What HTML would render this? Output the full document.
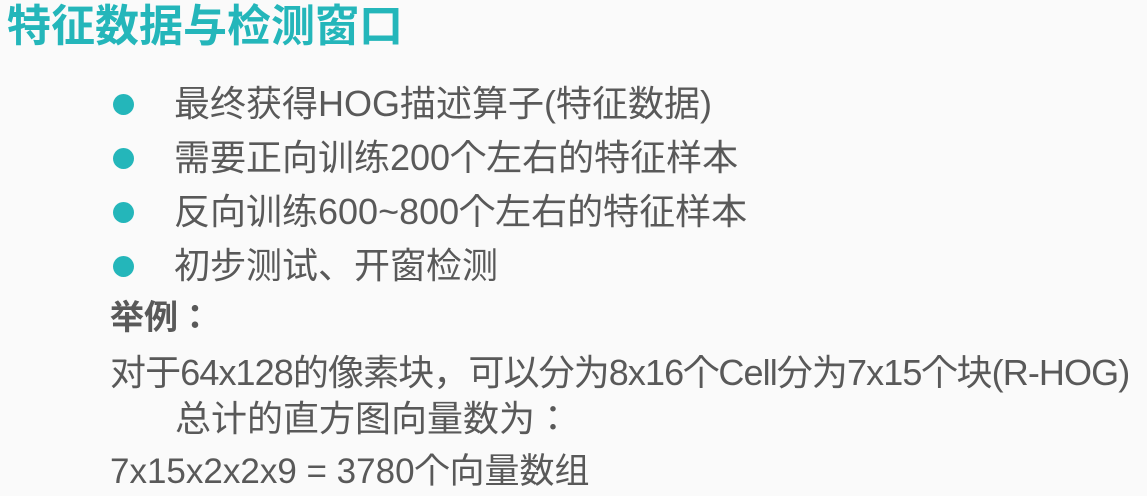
<!DOCTYPE html>
<html><head><meta charset="utf-8"><style>
html,body{margin:0;padding:0;}
body{width:1147px;height:496px;background:#fafafa;position:relative;overflow:hidden;font-family:"Liberation Sans","Noto Sans CJK JP",sans-serif;color:#595959;}
.t{position:absolute;white-space:nowrap;line-height:1;}
.title{left:7px;top:5px;font-size:44px;font-weight:bold;color:#24b6ba;}
.dot{position:absolute;left:113px;width:21px;height:21px;border-radius:50%;background:#24b6ba;}
.b{font-size:36px;left:174px;}
</style></head><body>
<div class="t title">特征数据与检测窗口</div>
<div class="dot" style="top:94px"></div>
<div class="dot" style="top:148px"></div>
<div class="dot" style="top:202px"></div>
<div class="dot" style="top:256px"></div>
<div class="t b" style="top:86px">最终获得HOG描述算子(特征数据)</div>
<div class="t b" style="top:140px">需要正向训练200个左右的特征样本</div>
<div class="t b" style="top:194px">反向训练600~800个左右的特征样本</div>
<div class="t b" style="top:248px">初步测试、开窗检测</div>
<div class="t" style="left:110px;top:301px;font-size:34px;font-weight:bold;">举例：</div>
<div class="t" style="left:110px;top:355px;font-size:36px;letter-spacing:-0.9px;">对于64x128的像素块，可以分为8x16个Cell分为7x15个块(R-HOG)</div>
<div class="t" style="left:175px;top:401px;font-size:36px;">总计的直方图向量数为：</div>
<div class="t" style="left:110px;top:454px;font-size:35px;">7x15x2x2x9 = 3780个向量数组</div>
</body></html>
